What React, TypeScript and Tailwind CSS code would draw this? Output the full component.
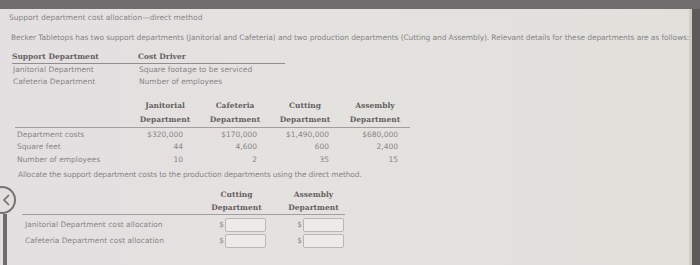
const FONT = "font-['DejaVu_Sans',sans-serif]";
const SERIF = "font-['DejaVu_Serif',serif] font-bold text-[#646162]";

const costCols = [
  { title: "Janitorial", cost: "$320,000", sqft: "44", emp: "10", pad: "pr-[17px]" },
  { title: "Cafeteria", cost: "$170,000", sqft: "4,600", emp: "2", pad: "pr-[13px]" },
  { title: "Cutting", cost: "$1,490,000", sqft: "600", emp: "35", pad: "pr-[11px]" },
  { title: "Assembly", cost: "$680,000", sqft: "2,400", emp: "15", pad: "pr-[12px]" },
];

function MoneyInput() {
  return (
    <div className="flex items-center gap-[1px]">
      <span className="text-[#8a8888]">$</span>
      <div className="h-[14px] w-[41px] rounded-[2px] border border-[#b9b7b4] bg-[#ecebe8]" />
    </div>
  );
}

export default function App() {
  return (
    <div
      className={`relative flex h-[265px] w-[700px] flex-col overflow-hidden bg-gradient-to-r from-[#e4dfe1] via-[#e4e2df] to-[#e1e0db] text-[7.5px] text-[#878586] ${FONT}`}
    >
      <div className="h-[9px] shrink-0 bg-[#716d6e]" />
      <div className="flex flex-1">
        <div className="min-w-0 flex-1 pl-[9px]">
          <p className="mt-[3px] leading-[12px]">Support department cost allocation—direct method</p>
          <p className="mt-[8px] pl-[2px] leading-[12px] tracking-[-0.1px] whitespace-nowrap">
            Becker Tabletops has two support departments (Janitorial and Cafeteria) and two production departments
            (Cutting and Assembly). Relevant details for these departments are as follows:
          </p>

          {/* cost drivers */}
          <div className="mt-[7px] w-[276px] pl-[3px]">
            <div className="flex h-[13px] items-center border-b border-[#8f8d8e]">
              <span className={`w-[126px] ${SERIF}`}>Support Department</span>
              <span className={SERIF}>Cost Driver</span>
            </div>
            <div className="flex h-[12px] items-center">
              <span className="w-[126px] pl-[1px]">Janitorial Department</span>
              <span className="pl-[1px]">Square footage to be serviced</span>
            </div>
            <div className="flex h-[12px] items-center">
              <span className="w-[126px] pl-[1px]">Cafeteria Department</span>
              <span className="pl-[1px]">Number of employees</span>
            </div>
          </div>

          {/* department data */}
          <div className="mt-[11px] ml-[6px] w-[395px]">
            <div className="flex border-b border-[#a09e9f]">
              <div className="w-[115px]" />
              {costCols.map((c) => (
                <div key={c.title} className={`flex w-[70px] flex-col items-center leading-[14px] ${SERIF}`}>
                  <span>{c.title}</span>
                  <span>Department</span>
                </div>
              ))}
            </div>
            {[
              { label: "Department costs", key: "cost" as const },
              { label: "Square feet", key: "sqft" as const },
              { label: "Number of employees", key: "emp" as const },
            ].map((row) => (
              <div key={row.label} className="flex h-[12.5px] items-center">
                <span className="w-[115px] pl-[2px]">{row.label}</span>
                {costCols.map((c) => (
                  <span key={c.title} className={`w-[70px] text-right ${c.pad}`}>
                    {c[row.key]}
                  </span>
                ))}
              </div>
            ))}
          </div>

          <p className="mt-[3px] pl-[9px] leading-[12px] tracking-[-0.15px]">
            Allocate the support department costs to the production departments using the direct method.
          </p>

          {/* allocation */}
          <div className="mt-[7px] ml-[13px] w-[323px]">
            <div className="flex border-b border-[#a09e9f] leading-[13px]">
              <div className="w-[183px]" />
              <div className={`flex w-[63px] flex-col items-center ${SERIF}`}>
                <span>Cutting</span>
                <span>Department</span>
              </div>
              <div className="w-[14px]" />
              <div className={`flex w-[63px] flex-col items-center ${SERIF}`}>
                <span>Assembly</span>
                <span>Department</span>
              </div>
            </div>
            <div className="pt-[2px]">
              {["Janitorial Department cost allocation", "Cafeteria Department cost allocation"].map((label) => (
                <div key={label} className="flex h-[16px] items-center">
                  <span className="w-[183px] pl-[3px]">{label}</span>
                  <div className="flex w-[63px] justify-end pr-[2px]">
                    <MoneyInput />
                  </div>
                  <div className="w-[14px]" />
                  <div className="flex w-[63px] justify-end pr-[1px]">
                    <MoneyInput />
                  </div>
                </div>
              ))}
            </div>
          </div>
        </div>
        <div className="w-[3px] bg-[#cfcdc6]" />
        <div className="w-[8px] bg-[#5d5a5b]" />
      </div>

      {/* side nav */}
      <div className="absolute left-[-12px] top-[186px] flex h-[28px] w-[28px] items-center justify-center rounded-full border-2 border-[#767374] bg-[#e2e0dd]">
        <svg width="10" height="12" viewBox="0 0 10 12" className="ml-[10px]">
          <path d="M7 1 L2 6 L7 11" fill="none" stroke="#6f6c6d" strokeWidth="1.6" />
        </svg>
      </div>
      <div className="absolute left-[3px] top-[214px] h-[51px] w-[4px] bg-[#6f6c6d]" />
    </div>
  );
}
